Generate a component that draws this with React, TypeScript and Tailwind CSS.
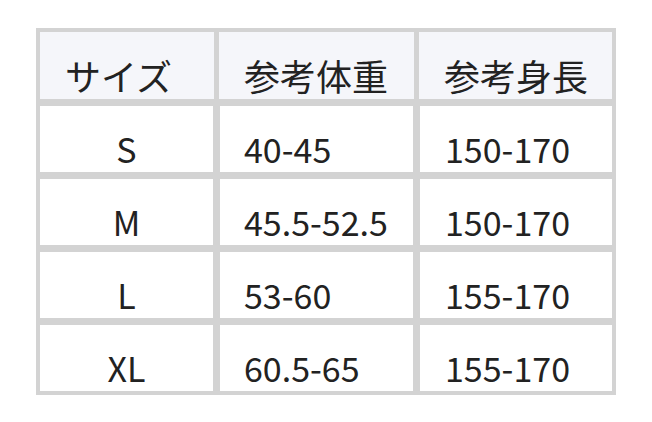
const header = ["サイズ", "参考体重", "参考身長"];

const rows = [
	{ size: "S", weight: "40-45", height: "150-170" },
	{ size: "M", weight: "45.5-52.5", height: "150-170" },
	{ size: "L", weight: "53-60", height: "155-170" },
	{ size: "XL", weight: "60.5-65", height: "155-170" },
];

const App = () => {
	return (
		<div
			className="w-[652px] h-[422px] bg-white pt-[28px] pl-[36px]"
			style={{ fontFamily: '"Noto Sans CJK JP", "Noto Sans", sans-serif' }}
		>
			<div className="w-[580px] bg-[#d3d3d3] p-[4px] flex flex-col gap-[7px] text-[34px] leading-none text-[#222222]">
				<div className="grid grid-cols-[174px_195px_193px] gap-x-[5px] h-[67px] text-[36px]">
					{header.map((item) => (
						<div
							key={item}
							className="bg-[#f5f6fa] flex items-end pl-[25px] pb-[6px]"
						>
							{item}
						</div>
					))}
				</div>
				{rows.map((row) => (
					<div
						key={row.size}
						className="grid grid-cols-[173px_193px_192px] gap-x-[7px] h-[66px]"
					>
						<div className="bg-white flex items-end justify-center pb-[6px]">
							{row.size}
						</div>
						<div className="bg-white flex items-end pl-[24px] pb-[6px]">
							{row.weight}
						</div>
						<div className="bg-white flex items-end pl-[25px] pb-[6px]">
							{row.height}
						</div>
					</div>
				))}
			</div>
		</div>
	);
};

export default App;
